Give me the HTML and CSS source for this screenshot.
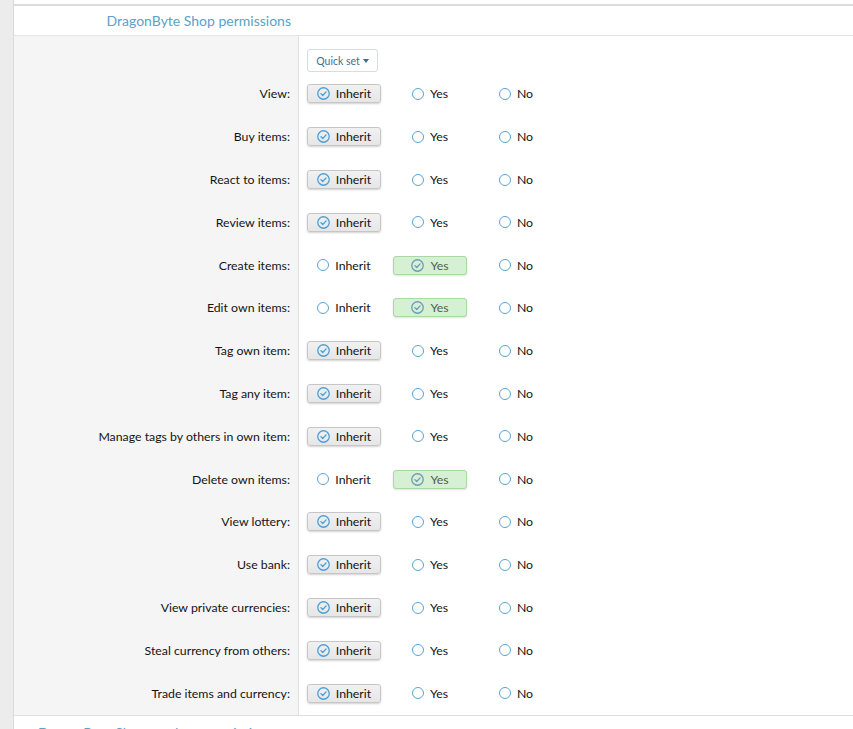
FILE: index.html
```html
<!DOCTYPE html>
<html lang="en">
<head>
    <meta charset="UTF-8">
    <meta name="viewport" content="width=device-width, initial-scale=1.0">
    <title>DragonByte Shop permissions</title>
    <link rel="stylesheet" href="styles.css">
</head>
<body>

<div class="page">
    <div class="side"></div>
    <div class="main">
        <div class="top-gap"></div>

        <div class="block">
            <h3 class="block-header"><span>DragonByte Shop permissions</span></h3>

            <div class="form">
                <div class="label quick-row"></div>
                <div class="value quick-row">
                    <button class="quick-set">Quick set <span class="caret"></span></button>
                </div>

                <div class="label">View:</div>
                <div class="value">
                    <div class="choices">
                        <span class="opt on-inherit"><svg viewBox="0 0 12 12"><circle cx="6" cy="6" r="5.3"/><path d="M3.6 6.1 L5.3 7.8 L8.4 4.5"/></svg>Inherit</span>
                        <span class="opt"><i class="radio"></i>Yes</span>
                        <span class="opt"><i class="radio"></i>No</span>
                    </div>
                </div>

                <div class="label">Buy items:</div>
                <div class="value">
                    <div class="choices">
                        <span class="opt on-inherit"><svg viewBox="0 0 12 12"><circle cx="6" cy="6" r="5.3"/><path d="M3.6 6.1 L5.3 7.8 L8.4 4.5"/></svg>Inherit</span>
                        <span class="opt"><i class="radio"></i>Yes</span>
                        <span class="opt"><i class="radio"></i>No</span>
                    </div>
                </div>

                <div class="label">React to items:</div>
                <div class="value">
                    <div class="choices">
                        <span class="opt on-inherit"><svg viewBox="0 0 12 12"><circle cx="6" cy="6" r="5.3"/><path d="M3.6 6.1 L5.3 7.8 L8.4 4.5"/></svg>Inherit</span>
                        <span class="opt"><i class="radio"></i>Yes</span>
                        <span class="opt"><i class="radio"></i>No</span>
                    </div>
                </div>

                <div class="label">Review items:</div>
                <div class="value">
                    <div class="choices">
                        <span class="opt on-inherit"><svg viewBox="0 0 12 12"><circle cx="6" cy="6" r="5.3"/><path d="M3.6 6.1 L5.3 7.8 L8.4 4.5"/></svg>Inherit</span>
                        <span class="opt"><i class="radio"></i>Yes</span>
                        <span class="opt"><i class="radio"></i>No</span>
                    </div>
                </div>

                <div class="label">Create items:</div>
                <div class="value">
                    <div class="choices">
                        <span class="opt"><i class="radio"></i>Inherit</span>
                        <span class="opt on-yes"><svg viewBox="0 0 12 12"><circle cx="6" cy="6" r="5.3"/><path d="M3.6 6.1 L5.3 7.8 L8.4 4.5"/></svg>Yes</span>
                        <span class="opt"><i class="radio"></i>No</span>
                    </div>
                </div>

                <div class="label">Edit own items:</div>
                <div class="value">
                    <div class="choices">
                        <span class="opt"><i class="radio"></i>Inherit</span>
                        <span class="opt on-yes"><svg viewBox="0 0 12 12"><circle cx="6" cy="6" r="5.3"/><path d="M3.6 6.1 L5.3 7.8 L8.4 4.5"/></svg>Yes</span>
                        <span class="opt"><i class="radio"></i>No</span>
                    </div>
                </div>

                <div class="label">Tag own item:</div>
                <div class="value">
                    <div class="choices">
                        <span class="opt on-inherit"><svg viewBox="0 0 12 12"><circle cx="6" cy="6" r="5.3"/><path d="M3.6 6.1 L5.3 7.8 L8.4 4.5"/></svg>Inherit</span>
                        <span class="opt"><i class="radio"></i>Yes</span>
                        <span class="opt"><i class="radio"></i>No</span>
                    </div>
                </div>

                <div class="label">Tag any item:</div>
                <div class="value">
                    <div class="choices">
                        <span class="opt on-inherit"><svg viewBox="0 0 12 12"><circle cx="6" cy="6" r="5.3"/><path d="M3.6 6.1 L5.3 7.8 L8.4 4.5"/></svg>Inherit</span>
                        <span class="opt"><i class="radio"></i>Yes</span>
                        <span class="opt"><i class="radio"></i>No</span>
                    </div>
                </div>

                <div class="label">Manage tags by others in own item:</div>
                <div class="value">
                    <div class="choices">
                        <span class="opt on-inherit"><svg viewBox="0 0 12 12"><circle cx="6" cy="6" r="5.3"/><path d="M3.6 6.1 L5.3 7.8 L8.4 4.5"/></svg>Inherit</span>
                        <span class="opt"><i class="radio"></i>Yes</span>
                        <span class="opt"><i class="radio"></i>No</span>
                    </div>
                </div>

                <div class="label">Delete own items:</div>
                <div class="value">
                    <div class="choices">
                        <span class="opt"><i class="radio"></i>Inherit</span>
                        <span class="opt on-yes"><svg viewBox="0 0 12 12"><circle cx="6" cy="6" r="5.3"/><path d="M3.6 6.1 L5.3 7.8 L8.4 4.5"/></svg>Yes</span>
                        <span class="opt"><i class="radio"></i>No</span>
                    </div>
                </div>

                <div class="label">View lottery:</div>
                <div class="value">
                    <div class="choices">
                        <span class="opt on-inherit"><svg viewBox="0 0 12 12"><circle cx="6" cy="6" r="5.3"/><path d="M3.6 6.1 L5.3 7.8 L8.4 4.5"/></svg>Inherit</span>
                        <span class="opt"><i class="radio"></i>Yes</span>
                        <span class="opt"><i class="radio"></i>No</span>
                    </div>
                </div>

                <div class="label">Use bank:</div>
                <div class="value">
                    <div class="choices">
                        <span class="opt on-inherit"><svg viewBox="0 0 12 12"><circle cx="6" cy="6" r="5.3"/><path d="M3.6 6.1 L5.3 7.8 L8.4 4.5"/></svg>Inherit</span>
                        <span class="opt"><i class="radio"></i>Yes</span>
                        <span class="opt"><i class="radio"></i>No</span>
                    </div>
                </div>

                <div class="label">View private currencies:</div>
                <div class="value">
                    <div class="choices">
                        <span class="opt on-inherit"><svg viewBox="0 0 12 12"><circle cx="6" cy="6" r="5.3"/><path d="M3.6 6.1 L5.3 7.8 L8.4 4.5"/></svg>Inherit</span>
                        <span class="opt"><i class="radio"></i>Yes</span>
                        <span class="opt"><i class="radio"></i>No</span>
                    </div>
                </div>

                <div class="label">Steal currency from others:</div>
                <div class="value">
                    <div class="choices">
                        <span class="opt on-inherit"><svg viewBox="0 0 12 12"><circle cx="6" cy="6" r="5.3"/><path d="M3.6 6.1 L5.3 7.8 L8.4 4.5"/></svg>Inherit</span>
                        <span class="opt"><i class="radio"></i>Yes</span>
                        <span class="opt"><i class="radio"></i>No</span>
                    </div>
                </div>

                <div class="label">Trade items and currency:</div>
                <div class="value">
                    <div class="choices">
                        <span class="opt on-inherit"><svg viewBox="0 0 12 12"><circle cx="6" cy="6" r="5.3"/><path d="M3.6 6.1 L5.3 7.8 L8.4 4.5"/></svg>Inherit</span>
                        <span class="opt"><i class="radio"></i>Yes</span>
                        <span class="opt"><i class="radio"></i>No</span>
                    </div>
                </div>
            </div>
        </div>

        <div class="block">
            <h3 class="block-header next"><span>DragonByte Shop product permissions</span></h3>
        </div>
    </div>
</div>

</body>
</html>
```

FILE: styles.css
```css
body {
    margin: 0;
    padding: 0;
    font-family: Lato, "Open Sans", sans-serif;
    font-size: 12.3px;
    color: #141414;
    background-color: #fff;
    overflow: hidden;
}

.page {
    display: flex;
    min-height: 729px;
}

.side {
    width: 13px;
    flex-shrink: 0;
    background-color: #ececec;
    border-right: 1px solid #dadada;
}

.main {
    flex: 1;
    min-width: 0;
}

.top-gap {
    height: 4px;
    border-bottom: 2px solid #dcdcdc;
}

.block {
    border-bottom: 1px solid #dedede;
}

.block-header {
    margin: 0;
    display: grid;
    grid-template-columns: 285px 1fr;
    height: 29px;
    border-bottom: 1px solid #e4e4e4;
    font-size: 14px;
    font-weight: normal;
    color: #5ba1c9;
}

.block-header span {
    text-align: right;
    padding: 6px 8px 0 0;
    white-space: nowrap;
}

/* following section header starts further left */
.block-header.next span {
    text-align: left;
    padding: 8px 0 0 24px;
}

.form {
    display: grid;
    grid-template-columns: 285px 1fr;
}

.label {
    box-sizing: border-box;
    height: 42.8px;
    display: flex;
    align-items: center;
    justify-content: flex-end;
    padding-right: 8px;
    background-color: #f5f5f5;
    border-right: 1px solid #e2e2e2;
}

.value {
    height: 42.8px;
    display: flex;
    align-items: center;
    padding-left: 8px;
}

.label.quick-row,
.value.quick-row {
    height: 36.6px;
    align-items: flex-start;
    box-sizing: border-box;
}

.value.quick-row {
    padding-top: 13px;
}

.quick-set {
    height: 23px;
    width: 71px;
    padding: 0;
    background-color: #fff;
    border: 1px solid #d6dce2;
    border-radius: 3px;
    font-family: inherit;
    font-size: 10.5px;
    color: #3d6f93;
    display: flex;
    align-items: center;
    justify-content: center;
    gap: 3px;
}

.caret {
    width: 0;
    height: 0;
    border-left: 3.5px solid transparent;
    border-right: 3.5px solid transparent;
    border-top: 4px solid #3d6f93;
    margin-top: 1px;
}

.choices {
    display: grid;
    grid-template-columns: 74px 74px 74px;
    column-gap: 12px;
}

.opt {
    box-sizing: border-box;
    height: 19px;
    display: flex;
    align-items: center;
    justify-content: center;
    gap: 6px;
    border: 1px solid transparent;
    border-radius: 3px;
    white-space: nowrap;
}

.radio {
    box-sizing: border-box;
    width: 12px;
    height: 12px;
    border-radius: 50%;
    border: 1.5px solid #5aa3d2;
    background-color: #fff;
}

.opt svg {
    width: 13px;
    height: 13px;
    fill: none;
    stroke-width: 1.2;
    stroke-linecap: round;
    stroke-linejoin: round;
}

.on-inherit {
    background: linear-gradient(#f1f1f1, #e6e6e6);
    border-color: #c6c6c6;
    box-shadow: 0 1px 2px rgba(0, 0, 0, 0.18);
}

.on-inherit svg {
    stroke: #4c9fd6;
}

.on-yes {
    background-color: #d6f0d3;
    border-color: #a9d8a3;
    color: #4f5f4f;
    box-shadow: 0 1px 2px rgba(0, 0, 0, 0.12);
}

.on-yes svg {
    stroke: #6d9bb9;
}
```
